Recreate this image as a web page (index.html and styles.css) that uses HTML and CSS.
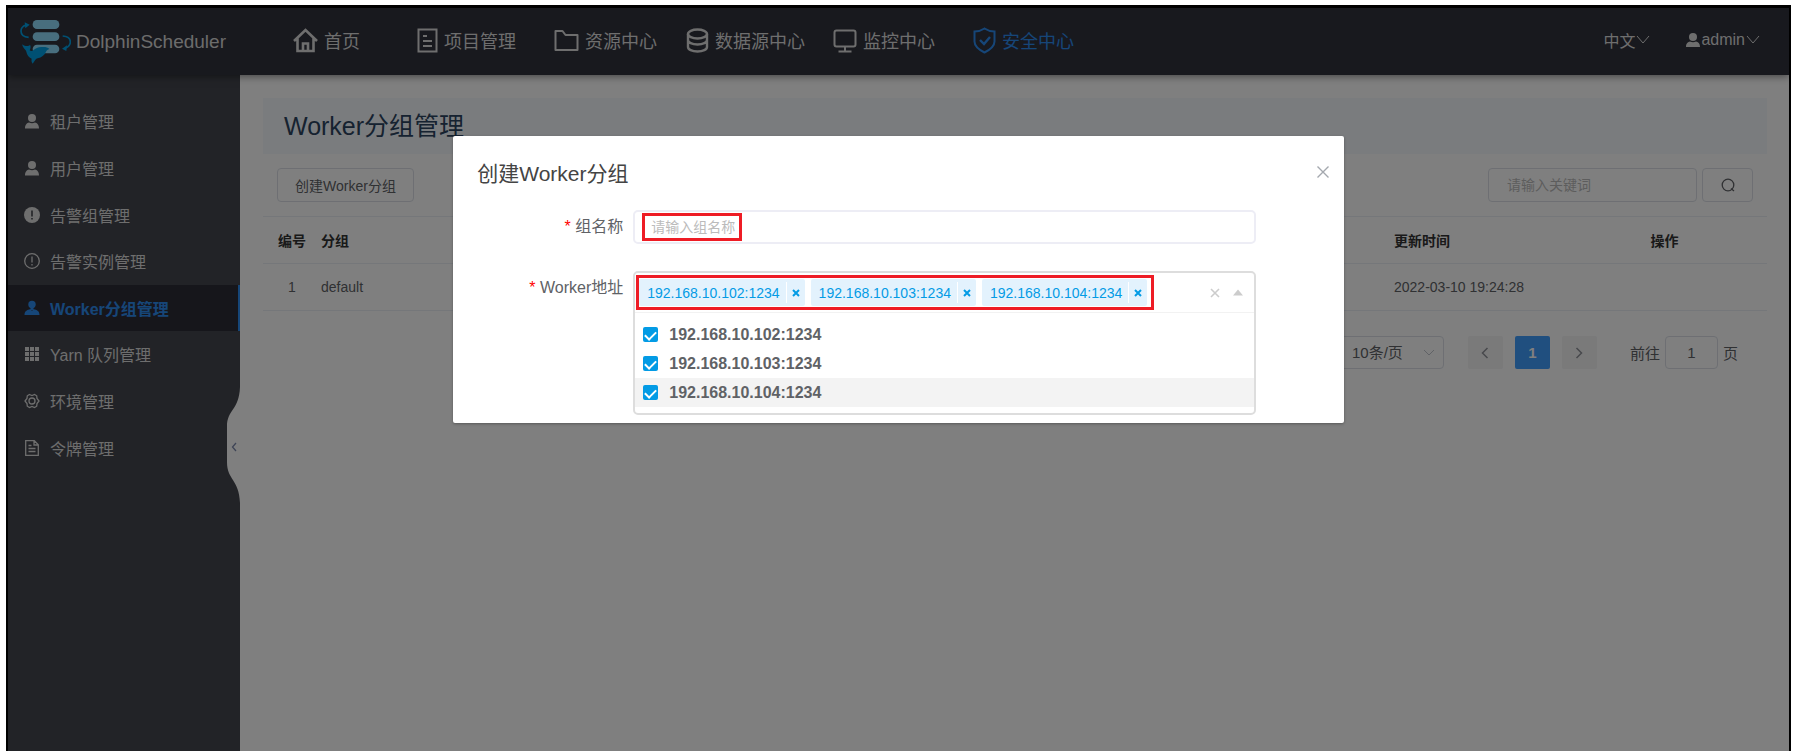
FILE: index.html
```html
<!DOCTYPE html>
<html lang="zh-CN">
<head>
    <meta charset="UTF-8">
    <meta name="viewport" content="width=device-width, initial-scale=1.0">
    <title>DolphinScheduler</title>
    <link rel="stylesheet" href="styles.css">
</head>
<body>
    <div class="app">
        <header class="topbar">
            <a class="logo" href="#">
                <svg width="51" height="46" viewBox="60 58 153 138" fill="none">
                    <g fill="#90dcfc">
                        <rect x="98" y="61" width="80" height="27" rx="13"/>
                        <rect x="98" y="98" width="80" height="26" rx="13"/>
                        <rect x="98" y="135" width="80" height="26" rx="13"/>
                    </g>
                    <path d="M86 113C70 112 63 104 63 94c0-9 6-15 15-18" stroke="#00a0e6" stroke-width="5"/>
                    <path d="M74 68l15 7-13 11z" fill="#00a0e6"/>
                    <path d="M188 109c14 1 23 8 23 18 0 9-5 14-14 18" stroke="#00a0e6" stroke-width="5"/>
                    <path d="M201 137l-2 17-13-7z" fill="#00a0e6"/>
                    <path d="M67 134c5 5 10 5 14 5 4 0 7-1 9-4 3 5 2 11-1 17 3 3 7 3 11 0 6-6 14-10 24-10 10-1 19 0 24 6-5 2-8 4-10 8-5 11-13 17-25 20-6 1-9 8-15 16-4-5-4-10-3-15-9-4-14-12-16-21-1-4-3-6-6-9-4-4-6-8-6-13z" fill="#00a0e6"/>
                </svg>
                <span>DolphinScheduler</span>
            </a>
            <nav class="nav">
                <a href="#">
                    <svg width="25" height="25" viewBox="0 0 25 25" fill="none" stroke="currentColor" stroke-width="2.6">
                        <path d="M1 13L12.500 2 24 13M4.500 10v13h16V10M10 23v-7.500h5V23"/>
                    </svg>
                    <span>首页</span>
                </a>
                <a href="#">
                    <svg width="21" height="25" viewBox="0 0 21 25" fill="none" stroke="currentColor" stroke-width="2">
                        <path d="M1.500 1.500h18v22h-18zM6 8h4M6 13h9M6 18h9"/>
                    </svg>
                    <span>项目管理</span>
                </a>
                <a href="#">
                    <svg width="25" height="25" viewBox="0 0 25 25" fill="none" stroke="currentColor" stroke-width="2">
                        <path d="M1.500 3h7l3 4h12v15h-22z" stroke-linejoin="round"/>
                    </svg>
                    <span>资源中心</span>
                </a>
                <a href="#">
                    <svg width="23" height="25" viewBox="0 0 23 25" fill="none" stroke="currentColor" stroke-width="2.400">
                        <ellipse cx="11.500" cy="6" rx="9.500" ry="4.500"/>
                        <path d="M2 6v13c0 2.500 4 4.500 9.500 4.500S21 21.500 21 19V6M2 12c0 2.500 4 4.500 9.500 4.500S21 14.500 21 12"/>
                    </svg>
                    <span>数据源中心</span>
                </a>
                <a href="#">
                    <svg width="24" height="25" viewBox="0 0 24 25" fill="none" stroke="currentColor" stroke-width="2">
                        <rect x="1.500" y="2.500" width="21" height="16" rx="2"/>
                        <path d="M12 18.500v4.500M5.500 23.500h13"/>
                    </svg>
                    <span>监控中心</span>
                </a>
                <a class="active" href="#">
                    <svg width="23" height="27" viewBox="0 0 23 27" fill="none" stroke="currentColor" stroke-width="2">
                        <path d="M11.500 1.500c3 2 6 3 10 3v10c0 5-4 8-10 11-6-3-10-6-10-11v-10c4 0 7-1 10-3z"/>
                        <path d="M7 13l4 4 6-7" stroke-width="2.400"/>
                    </svg>
                    <span>安全中心</span>
                </a>
            </nav>
            <div class="user-menu">
                <button type="button">中文<svg width="14" height="10" viewBox="0 0 14 10" fill="none" stroke="currentColor"><path d="M1 1l6 7 6-7"/></svg></button>
                <button type="button"><svg width="14" height="14" viewBox="0 0 14 14" fill="currentColor"><circle cx="7" cy="4" r="4"/><path d="M0 14c0-4 2-5 4-5.500 2 1 4 1 6 0 2 .5 4 1.500 4 5.500z"/></svg>admin<svg width="14" height="10" viewBox="0 0 14 10" fill="none" stroke="currentColor"><path d="M1 1l6 7 6-7"/></svg></button>
            </div>
        </header>

        <div class="body">
            <aside class="sidebar">
                <ul class="menu">
                    <li><a href="#">
                        <svg width="16" height="16" viewBox="0 0 16 16" fill="currentColor"><circle cx="8" cy="5" r="4"/><path d="M1 15.500c0-4 2-5.500 4-6 2 1 4 1 6 0 2 .5 4 2 4 6z"/></svg>
                        租户管理</a></li>
                    <li><a href="#">
                        <svg width="16" height="16" viewBox="0 0 16 16" fill="currentColor"><circle cx="8" cy="5" r="4"/><path d="M1 15.500c0-4 2-5.500 4-6 2 1 4 1 6 0 2 .5 4 2 4 6z"/></svg>
                        用户管理</a></li>
                    <li><a href="#">
                        <svg width="16" height="16" viewBox="0 0 16 16"><circle cx="8" cy="8" r="8" fill="currentColor"/><path d="M8 3.500v6M8 11v1.500" stroke="#44464e" stroke-width="1.600"/></svg>
                        告警组管理</a></li>
                    <li><a href="#">
                        <svg width="16" height="16" viewBox="0 0 16 16" fill="none" stroke="currentColor" stroke-width="1.300"><circle cx="8" cy="8" r="7.300"/><path d="M8 3.500v6M8 11v1.500"/></svg>
                        告警实例管理</a></li>
                    <li><a class="active" href="#">
                        <svg width="16" height="16" viewBox="0 0 16 16" fill="currentColor"><circle cx="8" cy="4.500" r="3.700"/><path d="M6.500 7h3v3h-3zM.5 15c0-4 2.500-5 6-6l1.500 2 1.500-2c3.500 1 6 2 6 6z"/></svg>
                        Worker分组管理</a></li>
                    <li><a href="#">
                        <svg width="16" height="16" viewBox="0 0 16 16" fill="currentColor"><path d="M1 1h4v4H1zM6 1h4v4H6zM11 1h4v4h-4zM1 6h4v4H1zM6 6h4v4H6zM11 6h4v4h-4zM1 11h4v4H1zM6 11h4v4H6zM11 11h4v4h-4z"/></svg>
                        Yarn 队列管理</a></li>
                    <li><a href="#">
                        <svg width="16" height="16" viewBox="0 0 16 16" fill="none" stroke="currentColor" stroke-width="1.300"><path d="M5.500 1.500L8 2.500l2.500-1 2.200 1.300.3 2.700L15 8l-2 2.500-.3 2.700-2.200 1.300-2.500-1-2.500 1-2.200-1.300-.3-2.700L1 8l2-2.500.3-2.700z"/><circle cx="8" cy="8" r="3"/></svg>
                        环境管理</a></li>
                    <li><a href="#">
                        <svg width="16" height="16" viewBox="0 0 16 16" fill="none" stroke="currentColor" stroke-width="1.300"><path d="M1.700.7h8.600l4 4v10.600H1.700zM10 1v4h4M4.500 5.500h3M4.500 8.500h7M4.500 11.500h7"/></svg>
                        令牌管理</a></li>
                </ul>
                <button class="collapse" type="button" aria-label="收起">
                    <svg width="13" height="116" viewBox="0 0 13 116"><path d="M13 0C12 24 0 22 0 40v35c0 18 12 17 13 41z" fill="#fff"/><path d="M9 56L5.500 60 9 64" fill="none" stroke="#7c88ac" stroke-width="1.300"/></svg>
                </button>
            </aside>

            <main class="content">
                <h1>Worker分组管理</h1>
                <div class="toolbar">
                    <button class="btn" type="button">创建Worker分组</button>
                    <form class="search" action="#">
                        <input type="text" placeholder="请输入关键词" aria-label="请输入关键词">
                        <button type="submit" aria-label="搜索">
                            <svg width="14" height="14" viewBox="0 0 14 14" fill="none" stroke="currentColor" stroke-width="1.300"><circle cx="7" cy="7" r="5.800"/><path d="M10 10.500l3 2.500"/></svg>
                        </button>
                    </form>
                </div>
                <table class="list">
                    <thead>
                        <tr><th class="num">编号</th><th>分组</th><th class="time">更新时间</th><th class="action">操作</th></tr>
                    </thead>
                    <tbody>
                        <tr><td class="num">1</td><td>default</td><td class="time">2022-03-10 19:24:28</td><td class="action"></td></tr>
                    </tbody>
                </table>
                <div class="pagination">
                    <div class="page-size">
                        <select aria-label="每页条数"><option>10条/页</option></select>
                        <svg width="12" height="8" viewBox="0 0 12 8" fill="none" stroke="currentColor"><path d="M1 1l5 5 5-5"/></svg>
                    </div>
                    <div class="pages">
                        <button type="button" aria-label="上一页"><svg width="8" height="12" viewBox="0 0 8 12" fill="none" stroke="currentColor" stroke-width="1.500"><path d="M6.500 1l-5 5 5 5"/></svg></button>
                        <button class="current" type="button">1</button>
                        <button type="button" aria-label="下一页"><svg width="8" height="12" viewBox="0 0 8 12" fill="none" stroke="currentColor" stroke-width="1.500"><path d="M1.500 1l5 5-5 5"/></svg></button>
                    </div>
                    <label class="jump">前往 <input type="text" value="1"> 页</label>
                </div>
            </main>
        </div>

        <div class="mask">
            <div class="dialog" role="dialog" aria-labelledby="dialog-title">
                <div class="dialog-header">
                    <h2 id="dialog-title">创建Worker分组</h2>
                    <button type="button" aria-label="关闭"><svg width="14" height="14" viewBox="0 0 14 14" fill="none" stroke="currentColor" stroke-width="1.400"><path d="M1.500 1.500l11 11M12.500 1.500l-11 11"/></svg></button>
                </div>
                <form class="dialog-form" action="#">
                    <label for="group-name"><i>*</i> 组名称</label>
                    <div class="field">
                        <input id="group-name" type="text" placeholder="请输入组名称">
                        <span class="mark"></span>
                    </div>

                    <label for="addr-102"><i>*</i> Worker地址</label>
                    <div class="tree-select">
                        <div class="tree-control">
                            <div class="tags">
                                <span class="tag">192.168.10.102:1234<button type="button" aria-label="移除"><svg width="8" height="8" viewBox="0 0 8 8" stroke="currentColor" stroke-width="2"><path d="M1 1l6 6M7 1L1 7"/></svg></button></span>
                                <span class="tag">192.168.10.103:1234<button type="button" aria-label="移除"><svg width="8" height="8" viewBox="0 0 8 8" stroke="currentColor" stroke-width="2"><path d="M1 1l6 6M7 1L1 7"/></svg></button></span>
                                <span class="tag">192.168.10.104:1234<button type="button" aria-label="移除"><svg width="8" height="8" viewBox="0 0 8 8" stroke="currentColor" stroke-width="2"><path d="M1 1l6 6M7 1L1 7"/></svg></button></span>
                            </div>
                            <div class="tree-icons">
                                <button type="button" aria-label="清空"><svg width="10" height="10" viewBox="0 0 10 10" stroke="currentColor" stroke-width="1.600"><path d="M1 1l8 8M9 1L1 9"/></svg></button>
                                <button type="button" aria-label="展开"><svg width="12" height="7" viewBox="0 0 12 7" fill="currentColor"><path d="M1 6.500l5-6 5 6z"/></svg></button>
                            </div>
                        </div>
                        <div class="tree-menu">
                            <label><input id="addr-102" type="checkbox" checked>192.168.10.102:1234</label>
                            <label><input type="checkbox" checked>192.168.10.103:1234</label>
                            <label class="highlight"><input type="checkbox" checked>192.168.10.104:1234</label>
                        </div>
                    </div>
                </form>
            </div>
        </div>
    </div>
</body>
</html>
```
FILE: styles.css
```css
* {
    padding: 0;
    margin: 0;
    box-sizing: border-box;
}

body {
    padding: 5px 5px 0 6px;
    background: #fff;
    color: #606266;
    font-family: "Liberation Sans", "Noto Sans CJK SC", sans-serif;
    font-size: 14px;
}

button, input, select {
    font: inherit;
    color: inherit;
    background: none;
    border: none;
    outline: none;
}

button {
    cursor: pointer;
}

a {
    color: inherit;
    text-decoration: none;
}

svg {
    display: block;
    flex: none;
}

.app {
    position: relative;
    display: flex;
    flex-direction: column;
    height: calc(100vh - 5px);
    border: 2px solid #000;
    border-top-width: 3px;
    border-bottom: none;
    overflow: hidden;
}

/* Topbar */

.topbar {
    display: flex;
    align-items: center;
    height: 67px;
    padding: 0 29px 0 12px;
    background: #30323c;
    color: #fff;
    box-shadow: 0 1px 8px rgba(0, 0, 0, .5);
    z-index: 1;
}

.logo {
    display: flex;
    align-items: center;
    gap: 5px;
    width: 273px;
    font-size: 19px;
    color: #d8d8d8;
}

.nav {
    display: grid;
    grid-template-columns: 124px 137px 132px 147px 140px auto;
    font-size: 18px;
    color: #dcdcdc;
}

.nav a {
    display: flex;
    align-items: center;
    gap: 6px;
    height: 64px;
    margin-bottom: 3px;
}

.nav .active {
    color: #2d8cf0;
}

.user-menu {
    display: flex;
    gap: 36px;
    margin: 0 0 3px auto;
    font-size: 16px;
    color: #dcdcdc;
}

.user-menu button {
    display: flex;
    align-items: center;
    gap: 1px;
}

/* Sidebar */

.body {
    flex: 1;
    display: flex;
}

.sidebar {
    position: relative;
    width: 232px;
    padding-top: 23px;
    background: #44464e;
}

.menu {
    display: grid;
    grid-template-rows: repeat(8, 1fr);
    height: 373px;
    list-style: none;
    font-size: 16px;
    color: #dcdcdc;
}

.menu a {
    display: flex;
    align-items: center;
    gap: 10px;
    height: 100%;
    padding-left: 16px;
}

.menu .active {
    background: #2c2d37;
    color: #2d8cf0;
    font-weight: bold;
    border-right: 2px solid #2d8cf0;
}

.collapse {
    position: absolute;
    top: 312px;
    right: 0;
}

/* Content */

.content {
    flex: 1;
    padding: 23px 22px 0 23px;
    background: #fff;
}

.content h1 {
    height: 56px;
    padding-left: 21px;
    background: #f5f9fd;
    color: #2c4460;
    font-size: 25px;
    font-weight: normal;
    line-height: 56px;
}

.toolbar {
    display: flex;
    justify-content: space-between;
    height: 62px;
    padding: 14px 14px 0;
}

.btn, .search input, .search button {
    height: 34px;
    border: 1px solid #dcdfe6;
    border-radius: 4px;
}

.btn {
    width: 137px;
}

.search {
    display: flex;
    gap: 5px;
}

.search input {
    width: 209px;
    padding: 0 18px;
}

.search button {
    display: flex;
    align-items: center;
    justify-content: center;
    width: 51px;
}

::placeholder {
    color: #bbb;
    opacity: 1;
}

.list {
    width: 100%;
    border-collapse: collapse;
    border-top: 1px solid #ebeef5;
    text-align: left;
}

.list th, .list td {
    height: 47px;
    border-bottom: 1px solid #ebeef5;
}

.list th {
    color: #333;
}

.list .num {
    width: 58px;
    text-align: center;
}

.list .time {
    width: 168px;
}

.list .action {
    width: 205px;
    text-align: center;
}

.pagination {
    display: flex;
    align-items: center;
    justify-content: flex-end;
    padding: 25px 29px 0 0;
    font-size: 15px;
}

.page-size {
    display: flex;
    align-items: center;
    width: 107px;
    height: 33px;
    padding: 0 8px 0 14px;
    border: 1px solid #dcdfe6;
    border-radius: 4px;
}

.page-size select {
    flex: 1;
    appearance: none;
}

.page-size svg {
    color: #c0c4cc;
}

.pages {
    display: flex;
    gap: 12px;
    margin: 0 33px 0 24px;
}

.pages button {
    display: flex;
    align-items: center;
    justify-content: center;
    width: 35px;
    height: 33px;
    background: #f4f4f5;
    border-radius: 2px;
    color: #909399;
}

.pages .current {
    background: #409eff;
    color: #fff;
    font-weight: bold;
}

.jump {
    display: flex;
    align-items: center;
    gap: 5px;
}

.jump input {
    width: 53px;
    height: 33px;
    border: 1px solid #dcdfe6;
    border-radius: 4px;
    text-align: center;
}

/* Dialog */

.mask {
    position: absolute;
    inset: 0;
    display: flex;
    align-items: flex-start;
    justify-content: center;
    padding-top: 128px;
    background: rgba(0, 0, 0, .5);
    z-index: 2;
}

.dialog {
    width: 50%;
    padding-bottom: 8px;
    background: #fff;
    border-radius: 2px;
    box-shadow: 0 1px 3px rgba(0, 0, 0, .3);
}

.dialog-header {
    display: flex;
    align-items: center;
    justify-content: space-between;
    height: 74px;
    padding: 0 14px 3px 24px;
}

.dialog-header h2 {
    color: #444;
    font-size: 21px;
    font-weight: normal;
}

.dialog-header button {
    color: #a4a8ae;
}

.dialog-form {
    display: grid;
    grid-template-columns: 170px 1fr;
    gap: 27px 10px;
    padding-right: 88px;
}

.dialog-form > label {
    font-size: 16px;
    line-height: 34px;
    text-align: right;
}

.dialog-form i {
    color: #f00;
    font-style: normal;
}

.field {
    position: relative;
    height: 34px;
}

.field input {
    width: 100%;
    height: 34px;
    padding: 0 16px;
    border: 2px solid #ededf5;
    border-radius: 5px;
}

.mark {
    position: absolute;
    top: 3px;
    left: 9px;
    width: 100px;
    height: 28px;
    border: 3px solid #ee1c25;
    pointer-events: none;
}

.tree-select {
    border: 2px solid #ddd;
    border-radius: 5px;
}

.tree-control {
    display: flex;
    align-items: center;
    justify-content: space-between;
    height: 40px;
    padding: 0 10px 0 1px;
    border-bottom: 1px solid #f2f2f2;
}

.tags {
    display: flex;
    gap: 6px;
    padding: 1px 4px 1px 0;
    border: 3px solid #ee1c25;
}

.tag {
    display: flex;
    align-items: center;
    height: 27px;
    padding-left: 8px;
    background: #e3f2fd;
    border-radius: 2px;
    color: #039be5;
}

.tag button {
    display: flex;
    align-items: center;
    justify-content: center;
    width: 19px;
    height: 21px;
    margin-left: 6px;
    border-left: 1px solid #fff;
}

.tree-icons {
    display: flex;
    align-items: center;
    gap: 12px;
    color: #ccc;
}

.tree-menu {
    padding: 7px 0 6px;
}

.tree-menu label {
    display: flex;
    align-items: center;
    gap: 11px;
    height: 29px;
    padding-left: 8px;
    font-size: 16px;
    font-weight: bold;
}

.tree-menu .highlight {
    background: #f3f3f3;
}

.tree-menu input {
    display: flex;
    justify-content: center;
    appearance: none;
    width: 15px;
    height: 15px;
    background: #039be5;
    border-radius: 2px;
}

.tree-menu input::after {
    content: "";
    width: 9px;
    height: 5px;
    margin-top: 4px;
    border-left: 2px solid #fff;
    border-bottom: 2px solid #fff;
    transform: rotate(-45deg);
}
```
